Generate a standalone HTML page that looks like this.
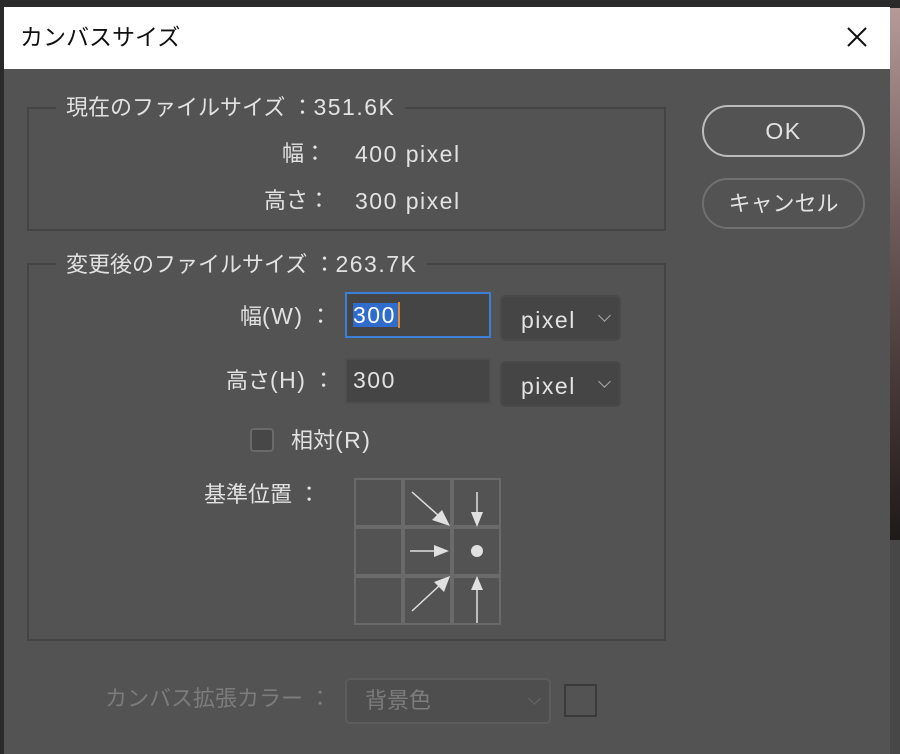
<!DOCTYPE html>
<html><head><meta charset="utf-8"><style>
*{margin:0;padding:0;box-sizing:border-box}
body{width:900px;height:754px;overflow:hidden;background:#2a2a2a;position:relative;font-family:"Liberation Sans","Noto Sans CJK JP",sans-serif;color:#e2e2e2}
.a{position:absolute}
.t{position:absolute;font-size:22px;line-height:26px;white-space:nowrap}
.n{font-size:23px;letter-spacing:1.5px}
.box{position:absolute;border:2px solid #444}
.leg{position:absolute;background:#535353;padding:0 10px;font-size:22px;line-height:26px;white-space:nowrap}
.btn{position:absolute;border-radius:26px;text-align:center;font-size:22px}
.sel{position:absolute;background:#454545;border:2px solid #4a4a4a;border-radius:5px;font-size:22px}
.chev{position:absolute;right:10px;top:14px;width:9px;height:9px;border-right:1.5px solid #aaa;border-bottom:1.5px solid #aaa;transform:rotate(45deg)}
.cell{position:absolute;width:49px;height:49px;border:2px solid #6a6a6a}
</style></head><body>
<div class="a" style="left:890px;top:8px;width:10px;height:532px;background:linear-gradient(#b59a98,#6e5a5a 40%,#3a2e2e 80%,#1e1a1a)"></div>
<div class="a" style="left:890px;top:540px;width:10px;height:214px;background:#474747"></div>
<div class="a" style="left:4px;top:7px;width:886px;height:62px;background:#fff"></div>
<div class="t" style="left:20px;top:24px;color:#111;font-size:23px">カンバスサイズ</div>
<svg class="a" style="left:846px;top:26px" width="22" height="22"><path d="M2 2L20 20M20 2L2 20" stroke="#111" stroke-width="2"/></svg>
<div class="a" style="left:4px;top:69px;width:886px;height:685px;background:#535353"></div>

<div class="box" style="left:27px;top:107px;width:639px;height:124px"></div>
<div class="leg" style="left:56px;top:94px">現在のファイルサイズ ：<span class="n">351.6K</span></div>
<div class="t" style="left:282px;top:141px">幅：</div>
<div class="t n" style="left:355px;top:141px">400 pixel</div>
<div class="t" style="left:264px;top:188px">高さ：</div>
<div class="t n" style="left:355px;top:188px">300 pixel</div>

<div class="box" style="left:27px;top:263px;width:639px;height:378px"></div>
<div class="leg" style="left:56px;top:251px">変更後のファイルサイズ ：<span class="n">263.7K</span></div>

<div class="t" style="left:240px;top:303px">幅<span class="n">(W)</span> ：</div>
<div class="a" style="left:345px;top:292px;width:146px;height:46px;background:#454545;border:2px solid #3b7fd6"></div>
<div class="a" style="left:353px;top:303px;width:45px;height:24px;background:#2f6ccc"></div>
<div class="a" style="left:398px;top:302px;width:2px;height:26px;background:#e98a2c"></div>
<div class="t n" style="left:353px;top:302px;color:#fff">300</div>
<div class="sel" style="left:500px;top:295px;width:121px;height:46px"><span class="t n" style="left:19px;top:10px">pixel</span><div class="chev"></div></div>

<div class="t" style="left:226px;top:367px">高さ<span class="n">(H)</span> ：</div>
<div class="a" style="left:345px;top:358px;width:146px;height:46px;background:#454545;border:2px solid #4e4e4e"></div>
<div class="t n" style="left:353px;top:367px">300</div>
<div class="sel" style="left:500px;top:361px;width:121px;height:46px"><span class="t n" style="left:19px;top:10px">pixel</span><div class="chev"></div></div>

<div class="a" style="left:250px;top:428px;width:24px;height:24px;border:2px solid #6a6a6a;border-radius:4px;background:#474747"></div>
<div class="t" style="left:291px;top:427px">相対<span class="n">(R)</span></div>
<div class="t" style="left:204px;top:482px">基準位置 ：</div>

<div class="cell" style="left:354px;top:478px"></div>
<div class="cell" style="left:403px;top:478px"></div>
<div class="cell" style="left:452px;top:478px"></div>
<div class="cell" style="left:354px;top:527px"></div>
<div class="cell" style="left:403px;top:527px"></div>
<div class="cell" style="left:452px;top:527px"></div>
<div class="cell" style="left:354px;top:576px"></div>
<div class="cell" style="left:403px;top:576px"></div>
<div class="cell" style="left:452px;top:576px"></div>
<svg class="a" style="left:354px;top:478px" width="150" height="150" fill="#e0e0e0" stroke="#e0e0e0" stroke-width="1.5">
<path d="M58 14L94 46"/><polygon points="96,48 78,42 88,32" stroke="none"/>
<path d="M123 14L123 42"/><polygon points="117,34 129,34 123,49" stroke="none"/>
<path d="M56 73L82 73"/><polygon points="80,67 95,73 80,79" stroke="none"/>
<circle cx="123" cy="73" r="6" stroke="none"/>
<path d="M58 133L86 107"/><polygon points="96,98 90,114 80,104" stroke="none"/>
<path d="M123 145L123 110"/><polygon points="117,112 129,112 123,98" stroke="none"/>
</svg>

<div class="t" style="left:105px;top:686px;color:#7c7c7c">カンバス拡張カラー ：</div>
<div class="a" style="left:345px;top:678px;width:206px;height:46px;border:2px solid #5c5c5c;border-radius:5px;background:#4e4e4e"><span class="t" style="left:18px;top:8px;color:#7c7c7c">背景色</span><div class="chev" style="border-color:#666"></div></div>
<div class="a" style="left:564px;top:684px;width:33px;height:33px;border:2px solid #3a3a3a"></div>

<div class="btn" style="left:702px;top:105px;width:163px;height:52px;border:2px solid #bdbdbd;line-height:48px"><span class="n">OK</span></div>
<div class="btn" style="left:702px;top:178px;width:163px;height:51px;border:2px solid #707070;line-height:47px">キャンセル</div>
</body></html>
